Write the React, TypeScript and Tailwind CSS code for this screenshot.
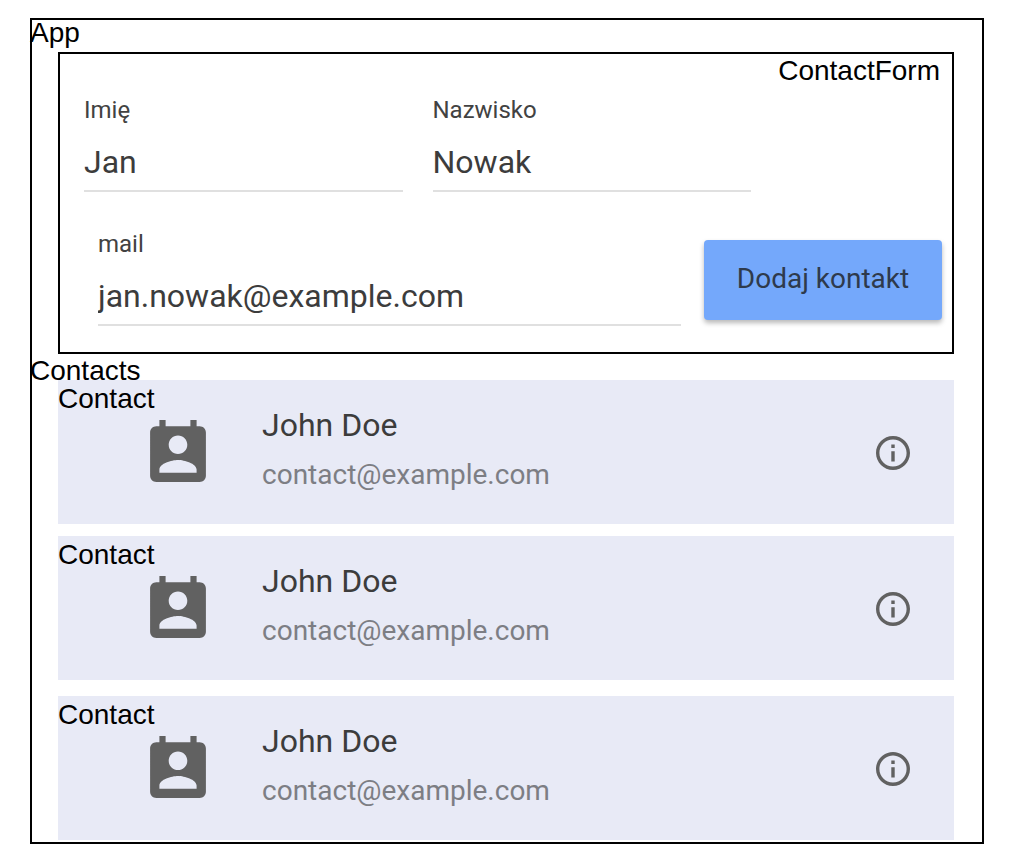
import { useId } from "react";

interface FieldProps {
  label: string;
  value: string;
  type?: string;
}

function Field({ label, value, type = "text" }: FieldProps) {
  const id = useId();
  return (
    <div className="min-w-0 flex-1">
      <label htmlFor={id} className="block text-2xl leading-8 text-[#424242]">
        {label}
      </label>
      <input
        id={id}
        type={type}
        defaultValue={value}
        className="mt-2 block h-[58px] w-full border-b-2 border-[#e0e0e0] bg-transparent text-[32px] text-[#3c3c3c] outline-none"
      />
    </div>
  );
}

function ContactForm() {
  return (
    <form
      className="border-2 border-black pb-[26px]"
      onSubmit={(event) => event.preventDefault()}
    >
      <h2 className="pr-3 text-right font-['Liberation_Sans',sans-serif] text-[28px] leading-[34px] text-black">
        ContactForm
      </h2>
      <div className="mt-1.5 flex gap-[30px] pr-[201px] pl-6">
        <Field label="Imię" value="Jan" />
        <Field label="Nazwisko" value="Nowak" />
      </div>
      <div className="mt-9 flex items-start gap-[23px] pr-2.5 pl-[38px]">
        <Field label="mail" value="jan.nowak@example.com" type="email" />
        <button
          type="submit"
          className="mt-3 h-20 w-[238px] shrink-0 rounded-[4px] bg-[#74a8fb] pb-0.5 text-[28px] text-[#2e3a4c] shadow-[0_3px_5px_rgba(0,0,0,0.28)]"
        >
          Dodaj kontakt
        </button>
      </div>
    </form>
  );
}

function ContactIcon() {
  return (
    <svg viewBox="3 1 18 20" className="h-[62px] w-14 shrink-0" fill="#616161" aria-hidden="true">
      <path d="M19 3h-1V1h-2v2H8V1H6v2H5c-1.11 0-2 .9-2 2v14c0 1.1.89 2 2 2h14c1.1 0 2-.9 2-2V5c0-1.1-.9-2-2-2zm-7 3c1.66 0 3 1.34 3 3s-1.34 3-3 3-3-1.34-3-3 1.34-3 3-3zm6 12H6v-1c0-2 4-3.1 6-3.1s6 1.1 6 3.1v1z" />
    </svg>
  );
}

function InfoIcon() {
  return (
    <svg viewBox="2 2 20 20" className="size-[34px]" fill="#616161" aria-hidden="true">
      <path d="M11 17h2v-6h-2v6zm1-15C6.48 2 2 6.48 2 12s4.48 10 10 10 10-4.48 10-10S17.52 2 12 2zm0 18c-4.41 0-8-3.59-8-8s3.59-8 8-8 8 3.59 8 8-3.59 8-8 8zM11 9h2V7h-2v2z" />
    </svg>
  );
}

interface ContactProps {
  name: string;
  email: string;
}

function Contact({ name, email }: ContactProps) {
  return (
    <li className="relative flex h-36 items-start bg-[#e8eaf6] pr-11 pl-[92px] last:mt-1">
      <span className="absolute top-0 left-0 font-['Liberation_Sans',sans-serif] text-[28px] leading-[38px] text-black">
        Contact
      </span>
      <div className="flex pt-10">
        <ContactIcon />
      </div>
      <div className="ml-14 min-w-0 flex-1 pt-[21px]">
        <p className="text-[32px] leading-[48px] text-[#3c3c3c]">{name}</p>
        <p className="text-[28px] leading-[52px] text-[#7d7e84]">{email}</p>
      </div>
      <button type="button" aria-label="Info" className="mt-14">
        <InfoIcon />
      </button>
    </li>
  );
}

const contacts: ContactProps[] = [
  { name: "John Doe", email: "contact@example.com" },
  { name: "John Doe", email: "contact@example.com" },
  { name: "John Doe", email: "contact@example.com" },
];

function Contacts() {
  return (
    <section>
      <h2 className="-ml-7 pt-2 font-['Liberation_Sans',sans-serif] text-[28px] leading-[18px] text-black">
        Contacts
      </h2>
      <ul className="flex flex-col gap-3">
        {contacts.map((contact, index) => (
          <Contact key={index} {...contact} />
        ))}
      </ul>
    </section>
  );
}

export default function App() {
  return (
    <div className="bg-white pt-[18px] pr-[38px] pb-4 pl-[30px] font-[Roboto,sans-serif]">
      <main className="border-2 border-black pr-7 pb-0.5 pl-[26px]">
        <h1 className="-ml-7 pb-1.5 font-['Liberation_Sans',sans-serif] text-[28px] leading-[26px] text-black">
          App
        </h1>
        <ContactForm />
        <Contacts />
      </main>
    </div>
  );
}
